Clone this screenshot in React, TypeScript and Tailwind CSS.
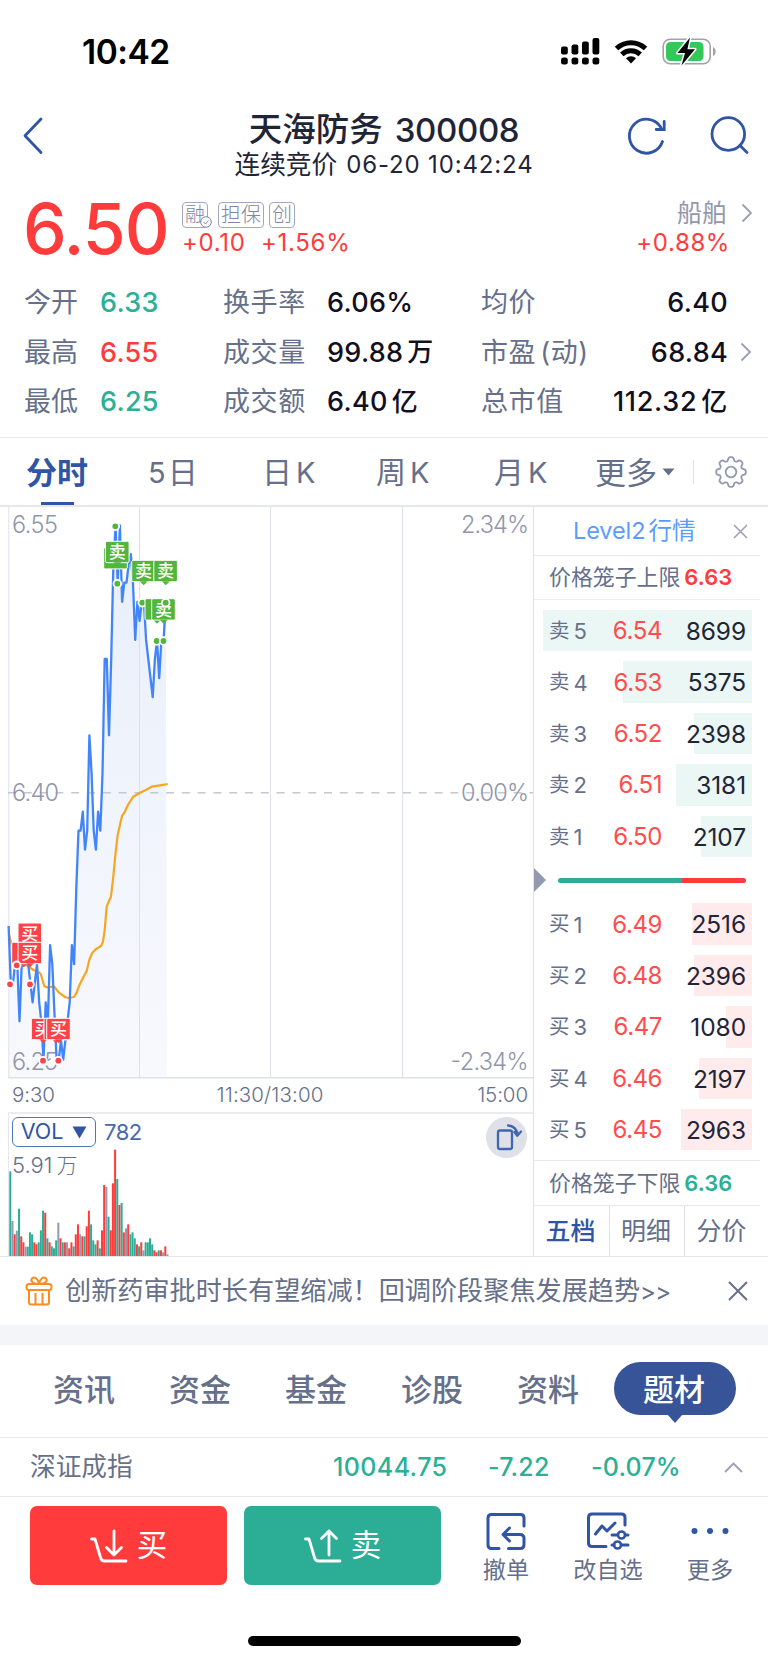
import { ReactNode } from 'react';
import { clsx } from 'clsx';

interface StatItem {
  label: string;
  value: string;
  unit?: string;
  color?: string;
}

interface BookRow {
  label: string;
  level: string;
  price: string;
  volume: number;
}

const MAX_VOLUME = 8699;

const statsLeft: StatItem[] = [
  { label: '今开', value: '6.33', color: 'text-[#2bb095]' },
  { label: '最高', value: '6.55', color: 'text-[#ff3b3b]' },
  { label: '最低', value: '6.25', color: 'text-[#2bb095]' },
];

const statsMiddle: StatItem[] = [
  { label: '换手率', value: '6.06%' },
  { label: '成交量', value: '99.88', unit: '万' },
  { label: '成交额', value: '6.40', unit: '亿' },
];

const statsRight: StatItem[] = [
  { label: '均价', value: '6.40' },
  { label: '市盈(动)', value: '68.84' },
  { label: '总市值', value: '112.32', unit: '亿' },
];

const sellRows: BookRow[] = [
  { label: '卖', level: '5', price: '6.54', volume: 8699 },
  { label: '卖', level: '4', price: '6.53', volume: 5375 },
  { label: '卖', level: '3', price: '6.52', volume: 2398 },
  { label: '卖', level: '2', price: '6.51', volume: 3181 },
  { label: '卖', level: '1', price: '6.50', volume: 2107 },
];

const buyRows: BookRow[] = [
  { label: '买', level: '1', price: '6.49', volume: 2516 },
  { label: '买', level: '2', price: '6.48', volume: 2396 },
  { label: '买', level: '3', price: '6.47', volume: 1080 },
  { label: '买', level: '4', price: '6.46', volume: 2197 },
  { label: '买', level: '5', price: '6.45', volume: 2963 },
];

const klineTabs = [
  { label: '日', width: 'w-[114px]' },
  { label: '周', width: 'w-[118px]' },
  { label: '月', width: 'w-[101px]' },
];

// one entry per minute, in cents above or below yesterday's close
const ticks = [
  -7, -10, -10, -9, -9, -12, -9, -9, -9, -9, -10, -11, -10, -9, -11, -12, -14, -11, -12, -8, -9, -11.5,
  -14, -14, -13, -14, -13, -12, -11, -8, -9, -5, -2, -2, -1, -3, -2, 3, 1, -2, -3, -1, -2, 1, 7, 7, 3,
  7, 12, 14, 11, 14, 10, 11, 11, 12, 12.5, 11, 8, 10, 9, 10, 10, 8, 7, 6, 5, 7, 8, 6, 8, 8, 10,
];

const avgLine =
  '9,428 9.7,431 11,437 15,452 21.7,459.7 26.7,459 33.3,464 38.3,465.7 40.7,468 44.3,480 46.7,481.3 54.3,480.7 59,486.7 65,491 68.3,492 74,491 76.7,486.7 79,480 83.3,471.3 86.7,465 89.3,454 92,447.3 95.7,443.3 101,440 103,435.7 104.7,424 106.7,400.7 109,395 111,390.7 113.3,370.7 115.7,345.7 117.7,329 122,310 124.3,306.7 128.3,298.3 133.3,290.7 140,286.7 145.7,284 151.7,280.7 160,279.3 167.7,278';

// height and direction of each minute's volume bar: g = down, r = up, n = flat
const volumes =
  '254g 105n 65r 76n 142g 59r 41r 28n 28g 71g 65g 41r 35r 41g 77g 136g 130r 53g 41r 29g 23g 47g 100n 53r 41g 41r 41n 23r 41r 29g 65r 95r 65n 59r 59g 89r 136r 95g 47g 35g 47r 23g 77r 213r 207n 118g 77r 218r 319r 231g 153r 159g 71r 83n 95r 65g 71g 53g 35r 29g 41r 17n 41g 41g 53g 35g 17r 11r 17g 17r 11n 29r 5n'
    .split(' ')
    .map((v) => ({ height: parseInt(v, 10) / 3, kind: v.slice(-1) }));

const barColors: Record<string, string> = { g: '#2bae95', r: '#ff3b3b', n: '#9399ae' };

const STEP = 2.183;
const LEFT = 8.6;

const pricePoints = ticks.map((t, i) => `${(LEFT + i * STEP).toFixed(1)},${(286.5 - t * 19.07).toFixed(1)}`).join(' ');

// eight round teeth
const gearPoints = Array.from({ length: 128 }, (_, i) => {
  const a = (i / 128) * Math.PI * 2;
  const r = 13 + 1.9 * Math.tanh(1.6 * Math.cos(8 * a) + 0.3);
  return `${(17 + r * Math.cos(a)).toFixed(2)},${(17 + r * Math.sin(a)).toFixed(2)}`;
}).join(' ');

const Tag = ({ x, y, text, color, tail = true }: { x: number; y: number; text?: string; color: string; tail?: boolean }) => (
  <g>
    <rect x={x} y={y} width="23.6" height="21.4" rx="1.5" fill={color} stroke="#fff" strokeWidth="1" />
    {tail && <path d={`M${x + 8} ${y + 21} l4 4 l4 -4z`} fill={color} />}
    {text && (
      <text x={x + 11.8} y={y + 17} textAnchor="middle" fontSize="17" fontWeight="500" fill="#fff">
        {text}
      </text>
    )}
  </g>
);

const Dot = ({ x, y, color }: { x: number; y: number; color: string }) => (
  <circle cx={x} cy={y} r="3.8" fill={color} stroke="#fff" strokeWidth="1.8" />
);

const GREEN = '#52b53c';
const RED = '#fc4448';

function StatusBar() {
  return (
    <div className="flex h-[102px] items-center justify-between pl-[82px] pr-[53px] pt-[3px]">
      <span className="text-[33.5px] font-semibold leading-none tracking-[-0.5px] text-black">10:42</span>
      <svg width="157" height="34" viewBox="0 0 157 34" className="mr-[-1px]">
        {[
          [0, 10.5],
          [10.5, 8.5],
          [21, 5.5],
          [31.5, 2],
        ].map(([x, y]) => (
          <g key={x}>
            <rect x={x + 2} y={y} width="6.8" height={18.5 - y} rx="2" />
            <rect x={x + 2} y="21.5" width="6.8" height="7" rx="2.5" />
          </g>
        ))}
        <g fill="none" stroke="#000" strokeWidth="5">
          <path d="M57.5 12.5 a21 21 0 0 1 29 0" />
          <path d="M62.8 18.3 a13.5 13.5 0 0 1 18.4 0" />
        </g>
        <path d="M72 27.5 l-5 -5.3 a7.4 7.4 0 0 1 10 0z" />
        <rect x="104.2" y="3.2" width="47" height="24.6" rx="7" fill="none" stroke="#a3a3a3" strokeWidth="1.6" />
        <path d="M154 11 q2.6 1 2.6 4.5 t-2.6 4.5z" fill="#a3a3a3" />
        <rect x="107" y="6" width="37.5" height="19" rx="4.5" fill="#34c759" />
        <path
          d="M131 1.5 L118.5 17 h7.5 l-3.5 12.5 L136 13.2 h-7.6z"
          fill="#000"
          stroke="#fff"
          strokeWidth="3"
          paintOrder="stroke"
          strokeLinejoin="round"
        />
      </svg>
    </div>
  );
}

function Header() {
  return (
    <header className="flex h-[88px] items-start justify-between pl-[22px] pr-[19px]">
      <svg width="24" height="40" viewBox="0 0 24 40" className="mt-[14px]" fill="none" stroke="#2f55a4" strokeWidth="2.8">
        <path d="M19 3 L3 19.8 L19 36.5" strokeLinecap="round" strokeLinejoin="round" />
      </svg>
      <div className="ml-[95px] flex flex-col items-center">
        <h1 className="mt-[11px] flex h-[34px] items-center text-[33.5px] font-medium leading-none text-[#1f2536]">
          天海防务<span className="ml-3 text-[33px] tracking-[-0.35px]">300008</span>
        </h1>
        <p className="mt-[5px] flex h-[26px] items-center text-[25.7px] leading-none text-[#1f2536]">
          连续竞价<span className="ml-[9px] text-2xl tracking-[0.85px]">06-20 10:42:24</span>
        </p>
      </div>
      <svg width="122" height="44" viewBox="0 0 122 44" className="mt-[12px]" fill="none" stroke="#2f55a4" strokeWidth="2.8" strokeLinecap="round">
        <path d="M35.5 27.5 A17 17 0 1 1 34 13.5" />
        <path d="M37.2 7.5 v8 h-8" />
        <circle cx="101.3" cy="20" r="16.3" />
        <path d="M113 31.5 l7 7" />
      </svg>
    </header>
  );
}

const Badge = ({ children }: { children: ReactNode }) => (
  <span className="relative flex h-[26px] items-center rounded-[4px] border border-[#a3a6bf] px-[2px] text-[20px] font-light leading-none text-[#8085a5]">
    {children}
  </span>
);

const Chevron = () => (
  <svg width="12" height="20" viewBox="0 0 12 20" fill="none" stroke="#9a9fb5" strokeWidth="1.8">
    <path d="M1.5 1.5 L10 10 L1.5 18.5" />
  </svg>
);

function PriceSummary() {
  return (
    <section className="flex h-[80px] pl-[23px] pr-[15px] leading-none">
      <div className="w-[159px] pt-[5px] text-[69.5px] font-medium leading-none tracking-[-1px] text-[#ff3b3b]">6.50</div>
      <div className="flex flex-1 flex-col pt-[12px]">
        <div className="flex gap-[10px]">
          <Badge>
            融
            <svg width="12" height="12" viewBox="0 0 12 12" className="absolute -bottom-px -right-[5px]" fill="#fff" stroke="#8085a5">
              <circle cx="6" cy="6" r="5.3" />
              <path d="M3.5 6 l2 2 l3 -3.4" fill="none" />
            </svg>
          </Badge>
          <Badge>担保</Badge>
          <span className="-ml-[5px]">
            <Badge>创</Badge>
          </span>
        </div>
        <div className="mt-[3px] flex gap-[15px] text-2xl leading-none tracking-[0.7px] text-[#ff3b3b]">
          <span className="w-[64px]">+0.10</span>
          <span>+1.56%</span>
        </div>
      </div>
      <div className="flex flex-col items-end pt-[9px]">
        <div className="flex h-[28px] items-center gap-[14px] text-[25px] text-[#9298ac]">
          船舶
          <Chevron />
        </div>
        <div className="mr-[23px] mt-[4px] text-2xl leading-none tracking-[0.6px] text-[#ff3b3b]">+0.88%</div>
      </div>
    </section>
  );
}

function Stats() {
  return (
    <section className="flex h-[168px] border-b border-[#e8e9ee] pl-[24px] pt-[8px] text-[27px] leading-none text-[#66708a]">
      <div className="w-[199px]">
        {statsLeft.map((s) => (
          <div key={s.label} className="flex h-[49.5px] items-center">
            <span className="w-[76px]">{s.label}</span>
            <span className={clsx('font-medium tracking-[0.3px]', s.color)}>{s.value}</span>
          </div>
        ))}
      </div>
      <div className="w-[258px]">
        {statsMiddle.map((s) => (
          <div key={s.label} className="flex h-[49.5px] items-center">
            <span className="w-[104px] tracking-[0.6px]">{s.label}</span>
            <span className="flex items-center font-medium tracking-[0.3px] text-[#120f1e]">
              {s.value}
              {s.unit && <span className="ml-[4px] text-[26px]">{s.unit}</span>}
            </span>
          </div>
        ))}
      </div>
      <div className="w-[247px]">
        {statsRight.map((s) => (
          <div key={s.label} className="flex h-[49.5px] items-center justify-between">
            <span className="tracking-[0.6px]">
              {s.label === '市盈(动)' ? (
                <>
                  市盈<span className="ml-[4px]">(动)</span>
                </>
              ) : (
                s.label
              )}
            </span>
            <span className={clsx('flex items-center font-medium text-[#120f1e]', s.unit ? 'tracking-[0.7px]' : 'tracking-[0.3px]')}>
              {s.value}
              {s.unit && <span className="ml-[4px] text-[26px]">{s.unit}</span>}
            </span>
          </div>
        ))}
      </div>
      <div className="flex h-[148px] items-center pl-[12px]">
        <Chevron />
      </div>
    </section>
  );
}

function PeriodTabs() {
  return (
    <nav className="flex h-[69px] items-center border-b-2 border-[#e6e7ec] pl-[26px] pr-[20px] pt-[1px] text-[30px] leading-none text-[#66708a]">
      <div className="relative flex h-full w-[122px] items-center text-[31px] font-bold text-[#2f55a4]">
        分时
        <span className="absolute bottom-0 left-[15px] h-[3px] w-[33px] bg-[#2f55a4]" />
      </div>
      <div className="flex w-[114px] items-center gap-[2px]">
        <span className="text-[29px]">5</span>日
      </div>
      {klineTabs.map((d) => (
        <div key={d.label} className={clsx('flex shrink-0 items-center gap-[4px]', d.width)}>
          {d.label}
          <span className="text-[29px]">K</span>
        </div>
      ))}
      <div className="flex items-center gap-[5px] text-[31px]">
        更多
        <svg width="13" height="8" viewBox="0 0 13 8" fill="#66708a">
          <path d="M0.5 0.5 h12 l-6 7z" />
        </svg>
      </div>
      <span className="ml-auto h-6 w-px bg-[#dfe1e8]" />
      <svg width="34" height="34" viewBox="0 0 34 34" className="ml-[20px] shrink-0" fill="none" stroke="#9399b0" strokeWidth="1.8" strokeLinejoin="round">
        <polygon points={gearPoints} />
        <circle cx="17" cy="17" r="5.3" />
      </svg>
    </nav>
  );
}

function PriceChart() {
  return (
    <svg width="534" height="572" viewBox="0 1 534 572" className="block">
      <defs>
        <linearGradient id="area" x1="0" y1="0" x2="0" y2="1">
          <stop offset="0" stopColor="#e8effb" />
          <stop offset="1" stopColor="#f8f9fd" />
        </linearGradient>
      </defs>
      <polygon points={`${LEFT},571 ${pricePoints} 167,571`} fill="url(#area)" />
      <g stroke="#dfe1e9" strokeWidth="1">
        <path d="M8.8 0 V571 M139.5 0 V571 M270.5 0 V571 M402.5 0 V571" />
        <path d="M8 571.8 H533" strokeWidth="1.5" />
      </g>
      <path d="M8 286.7 H533" stroke="#c5c8d4" strokeWidth="1.6" strokeDasharray="8 7.8" />
      <g fontSize="23.5" fill="#9096ac" fontWeight="300">
        <text x="12" y="26.5" textLength="46">6.55</text>
        <text x="12" y="295" textLength="47">6.40</text>
        <text x="12" y="563.5" textLength="46">6.25</text>
        <text x="461" y="26.5" textLength="68">2.34%</text>
        <text x="461" y="295" textLength="68">0.00%</text>
        <text x="450.5" y="563.5" textLength="78">-2.34%</text>
      </g>
      <polyline points={avgLine} fill="none" stroke="#f5a623" strokeWidth="2.2" strokeLinejoin="round" />
      <polyline points={pricePoints} fill="none" stroke="#4285fb" strokeWidth="2.3" strokeLinejoin="round" />

      <Tag x={103.7} y={41.5} color={GREEN} tail={false} />
      <Dot x={115.3} y={20.3} color={GREEN} />
      <Tag x={105.5} y={35.3} color={GREEN} text="卖" />
      <Dot x={117.3} y={77.7} color={GREEN} />
      <Dot x={142.3} y={96.7} color={GREEN} />
      <Tag x={131.7} y={54.3} color={GREEN} text="卖" />
      <Tag x={153.8} y={54.3} color={GREEN} text="卖" />
      <Tag x={145} y={92.7} color={GREEN} />
      <Tag x={151.7} y={92.7} color={GREEN} text="卖" />
      <Dot x={165.7} y={96.7} color={GREEN} />
      <Dot x={156.7} y={135} color={GREEN} />
      <Dot x={163.5} y={135} color={GREEN} />

      <Tag x={18} y={417} color={RED} text="买" tail={false} />
      <Tag x={11.7} y={436.3} color={RED} />
      <Tag x={18} y={436.3} color={RED} text="买" />
      <Dot x={10} y={478.3} color={RED} />
      <Dot x={16.7} y={459.3} color={RED} />
      <Dot x={30} y={478.3} color={RED} />
      <Tag x={31.3} y={512.3} color={RED} text="买" />
      <Tag x={44} y={512.3} color={RED} />
      <Tag x={46.7} y={512.3} color={RED} text="买" />
      <Dot x={43} y={554.7} color={RED} />
      <circle cx="54.5" cy="554.7" r="4" fill="#fff" />
      <Dot x={58.3} y={554.7} color={RED} />
    </svg>
  );
}

function VolumeChart() {
  return (
    <div className="relative h-[142px]">
      <svg width="534" height="142" viewBox="0 1 534 142" className="block">
        <path d="M8.5 0 V143" stroke="#e6e7ec" />
        {volumes.map((v, i) => (
          <rect key={i} x={9.3 + i * STEP} y={143 - v.height} width="2" height={v.height} fill={barColors[v.kind]} />
        ))}
      </svg>
      <div className="absolute left-[12px] top-[3px] flex h-[30px] items-center leading-none text-[#2f55a4]">
        <span className="flex h-[30px] w-[84px] items-center justify-center gap-[9px] rounded-[6px] border-[1.5px] border-[#5475b6] text-[21.5px]">
          VOL
          <svg width="15" height="13" viewBox="0 0 15 13" fill="#2f55a4">
            <path d="M0.5 0.5 h14 l-7 12z" />
          </svg>
        </span>
        <span className="ml-[8px] text-[22px] tracking-[-0.5px] text-[#4a69ad]">782</span>
      </div>
      <div className="absolute left-[12px] top-[40px] flex items-center text-[22px] font-light leading-none text-[#66708a]">
        5.91<span className="ml-1 text-[21px]">万</span>
      </div>
      <span className="absolute right-[6px] top-[3px] flex h-[41px] w-[41px] items-center justify-center rounded-full bg-[#dfe0e8]">
        <svg width="41" height="41" viewBox="0 0 41 41" fill="none" stroke="#4066ae" strokeWidth="2.3" strokeLinejoin="round" strokeLinecap="round">
          <rect x="12" y="13.5" width="14" height="18.5" rx="2" />
          <path d="M22 8.500 Q30 9 31.500 17 M35 14.500 L31.300 18.800 L28.500 15" />
        </svg>
      </span>
    </div>
  );
}

const OrderRow = ({ row, side }: { row: BookRow; side: 'sell' | 'buy' }) => (
  <div className="relative flex h-[41.4px] items-center pl-[6px] pr-[6px] pt-[1px] leading-none">
    <span
      className={clsx('absolute right-0 top-0 h-full', side === 'sell' ? 'bg-[#eaf7f4]' : 'bg-[#ffebeb]')}
      style={{ width: `${(row.volume / MAX_VOLUME) * 100}%` }}
    />
    <span className="relative flex w-[52px] items-center text-[20.5px] text-[#66708a]">
      {row.label}
      <span className="ml-[4px] text-[22px]">{row.level}</span>
    </span>
    <span className="relative w-[61px] text-right text-[24px] tracking-[-0.4px] text-[#ff4d4d]">{row.price}</span>
    <span className="relative flex-1 text-right text-[24.5px] tracking-[-0.1px] text-[#1f2536]">{row.volume}</span>
  </div>
);

function OrderBook() {
  return (
    <aside className="flex w-[227px] flex-col border-l border-[#e1e2ea] leading-none">
      <div className="flex h-[49px] items-center border-b border-[#e8e9ee] pl-[39px] pr-[12px] text-[#5b9dff]">
        <span className="text-[23.5px] tracking-[-0.1px]">Level2</span>
        <span className="ml-[3px] text-[23.5px]">行情</span>
        <svg width="15" height="15" viewBox="0 0 15 15" className="ml-auto" stroke="#9a9fb5" strokeWidth="1.5">
          <path d="M1 1 L14 14 M14 1 L1 14" />
        </svg>
      </div>
      <div className="flex h-[44px] items-center border-b border-[#eeeff4] pl-[15px] text-[21.9px] text-[#66708a]">
        价格笼子上限<span className="ml-[4px] font-semibold tracking-[0.1px] text-[#ff3b3b]">6.63</span>
      </div>
      <div className="ml-[9px] mr-[8px] mt-[10px] flex flex-col gap-[10px]">
        {sellRows.map((row) => (
          <OrderRow key={row.price} row={row} side="sell" />
        ))}
      </div>
      <div className="flex h-[46.5px] items-center">
        <svg width="12" height="24" viewBox="0 0 12 24" fill="#9399ae">
          <path d="M0 0 L12 12 L0 24z" />
        </svg>
        <div className="ml-[12px] flex h-[5px] w-[188px] overflow-hidden rounded-full">
          <span className="w-[124px] bg-[#2bae95]" />
          <span className="flex-1 bg-[#ff3b3b]" />
        </div>
      </div>
      <div className="ml-[9px] mr-[8px] flex flex-col gap-[10px]">
        {buyRows.map((row) => (
          <OrderRow key={row.price} row={row} side="buy" />
        ))}
      </div>
      <div className="mt-auto flex h-[45px] items-center border-t border-[#e8e9ee] pl-[15px] pt-[1px] text-[21.9px] text-[#66708a]">
        价格笼子下限<span className="ml-[4px] font-semibold tracking-[0.1px] text-[#2bb095]">6.36</span>
      </div>
      <div className="flex h-[51px] border-t border-[#e8e9ee] text-[25px] text-[#66708a]">
        <span className="flex w-[76px] items-center justify-center border-r border-[#dfe1e9] pr-[2px] font-medium text-[#2f55a4]">五档</span>
        <span className="flex w-[75px] items-center justify-center border-r border-[#dfe1e9] pr-[2px]">明细</span>
        <span className="flex w-[75px] items-center justify-center pr-[2px]">分价</span>
      </div>
    </aside>
  );
}

function Notice() {
  return (
    <div className="flex h-[68px] items-center pl-[25px] pr-[20px] leading-none text-[#66708a]">
      <svg width="28" height="30" viewBox="0 0 28 30" fill="none" stroke="#ff8a1f" strokeWidth="2" strokeLinejoin="round">
        <path d="M14 8 C8 8 5 5 7 2.500 C10 -0.500 13.500 4 14 8 C14.500 4 18 -0.500 21 2.500 C23 5 20 8 14 8" />
        <rect x="1.5" y="8" width="25" height="6" rx="2.5" />
        <path d="M4 14 V26 Q4 28.500 6.500 28.500 H21.500 Q24 28.500 24 26 V14 M10.500 17 V28 M17.500 17 V28" />
      </svg>
      <span className="ml-[12px] pt-[1px] text-[26.15px]">
        创新药审批时长有望缩减！回调阶段聚焦发展趋势
        <span className="text-[24px] tracking-[-0.7px]">&gt;&gt;</span>
      </span>
      <svg width="20" height="20" viewBox="0 0 20 20" className="ml-auto" stroke="#66708a" strokeWidth="2">
        <path d="M1 1 L19 19 M19 1 L1 19" />
      </svg>
    </div>
  );
}

function InfoTabs() {
  return (
    <nav className="flex h-[93px] items-center border-b border-[#e8e9ee] pl-[53px] text-[31px] font-medium leading-none text-[#66708a]">
      {['资讯', '资金', '基金', '诊股', '资料'].map((t) => (
        <span key={t} className="mt-[-4px] w-[116px] shrink-0">
          {t}
        </span>
      ))}
      <div className="relative ml-[-19px] mt-[-5px] flex h-[53px] w-[122px] shrink-0 items-center justify-center rounded-full bg-[#385498] pr-[2px] pt-[1px] text-white">
        题材
        <svg width="16" height="9" viewBox="0 0 16 9" className="absolute left-[53px] top-[52px]" fill="#385498">
          <path d="M0 0 h16 l-8 9z" />
        </svg>
      </div>
    </nav>
  );
}

function IndexRow() {
  return (
    <div className="flex h-[59px] items-center border-b border-[#e8e9ee] pl-[30px] pr-[25px] leading-none text-[#2bb095]">
      <span className="w-[303px] text-[25.7px] text-[#66708a]">深证成指</span>
      <span className="w-[155px] text-[25px] font-medium tracking-[0.4px]">10044.75</span>
      <span className="w-[103px] text-[25px] font-medium tracking-[0.2px]">-7.22</span>
      <span className="text-[25px] font-medium tracking-[0.2px]">-0.07%</span>
      <svg width="19" height="11" viewBox="0 0 19 11" className="ml-auto" fill="none" stroke="#9a9fb5" strokeWidth="1.8">
        <path d="M1 10 L9.500 1.500 L18 10" />
      </svg>
    </div>
  );
}

const CartIcon = ({ up }: { up?: boolean }) => (
  <svg width="38" height="36" viewBox="0 0 38 36" fill="none" stroke="#fff" strokeWidth="2.8" strokeLinecap="round" strokeLinejoin="round">
    <path d="M1.500 11 H5 L10.500 29.500 Q11.500 33 14.500 33 H36" />
    {up ? <path d="M25 27 V3 M17.500 10.500 L25 3 L32.500 10.500" /> : <path d="M24 3 V27 M16.500 19.500 L24 27 L31.500 19.500" />}
  </svg>
);

function ActionBar() {
  return (
    <footer className="flex h-[139px] items-start pl-[30px] pt-[9px] leading-none">
      <button className="flex h-[79px] w-[197px] items-center justify-center gap-[9px] rounded-[7px] bg-[#ff3b3b] text-[30.5px] text-white">
        <CartIcon />买
      </button>
      <button className="ml-[17px] flex h-[79px] w-[197px] items-center justify-center gap-[9px] rounded-[7px] bg-[#2bae95] text-[30.5px] text-white">
        <CartIcon up />卖
      </button>
      <div className="ml-[30px] flex text-[23.2px] text-[#66708a]">
        <div className="flex w-[70px] flex-col items-center gap-[7px] pt-[6px]">
          <svg width="40" height="40" viewBox="0 0 40 40" fill="none" stroke="#2f55a4" strokeWidth="3" strokeLinecap="round" strokeLinejoin="round">
            <path d="M38 14 V6 Q38 2.500 34.500 2.500 H5.500 Q2 2.500 2 6 V33 Q2 36.500 5.500 36.500 H13" />
            <path d="M22.500 36.500 H34 Q38 36.500 38 32.500 V26.500 Q38 22.500 34 22.500 H17.500 M23.500 16 L17 22.500 L23.500 29" />
          </svg>
          撤单
        </div>
        <div className="ml-[32px] flex w-[70px] flex-col items-center gap-[7px] pt-[6px]">
          <svg width="44" height="40" viewBox="0 0 44 40" fill="none" stroke="#2f55a4" strokeWidth="3" strokeLinecap="round" strokeLinejoin="round">
            <path d="M39 13 V5.500 Q39 2 35.500 2 H6 Q2.500 2 2.500 5.500 V31 Q2.500 34.500 6 34.500 H20" />
            <path d="M9.500 22 L16 14 L21 19 L29 11" />
            <path d="M26 23 H31 M39.500 23 H42 M26 33 H28 M36 33 H42" />
            <circle cx="35.5" cy="23" r="3.5" strokeWidth="2.6" />
            <circle cx="31.5" cy="33" r="3.5" strokeWidth="2.6" />
          </svg>
          <span className="whitespace-nowrap">改自选</span>
        </div>
        <div className="ml-[32px] flex w-[70px] flex-col items-center gap-[7px] pt-[6px]">
          <svg width="40" height="40" viewBox="0 0 40 40" fill="#2f55a4">
            <circle cx="4.5" cy="19" r="3" />
            <circle cx="20" cy="19" r="3" />
            <circle cx="35.5" cy="19" r="3" />
          </svg>
          更多
        </div>
      </div>
    </footer>
  );
}

export default function App() {
  return (
    <div className="flex h-[1663px] w-[768px] flex-col overflow-hidden bg-white font-['Inter','Noto_Sans_CJK_SC',sans-serif]">
      <StatusBar />
      <Header />
      <PriceSummary />
      <Stats />
      <PeriodTabs />
      <main className="flex h-[750px] border-b border-[#e6e7ec]">
        <div className="w-[533px]">
          <PriceChart />
          <div className="ml-[8px] flex h-[35px] items-center justify-between border-b-2 border-[#ebecf0] pl-[4px] pr-[5px] text-[20.5px] leading-none tracking-[-0.1px] text-[#66708a]">
            <span className="w-[70px] font-light">9:30</span>
            <span className="font-light tracking-[0.1px]">11:30/13:00</span>
            <span className="w-[70px] text-right font-light">15:00</span>
          </div>
          <VolumeChart />
        </div>
        <OrderBook />
      </main>
      <Notice />
      <div className="h-[20px] bg-[#f4f5f8]" />
      <InfoTabs />
      <IndexRow />
      <ActionBar />
      <div className="mx-auto h-[10px] w-[273px] rounded-full bg-black" />
    </div>
  );
}
